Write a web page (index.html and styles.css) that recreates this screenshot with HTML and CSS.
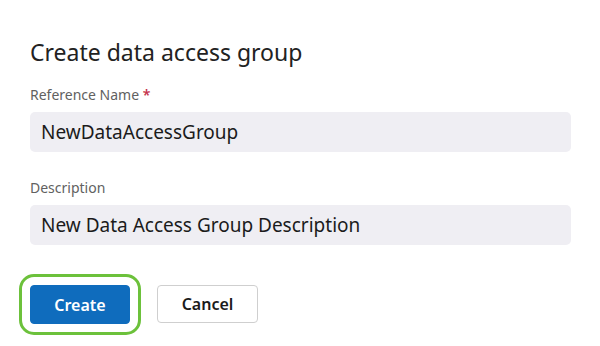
FILE: index.html
```html
<!DOCTYPE html>
<html lang="en">
<head>
<meta charset="utf-8">
<title>Create data access group</title>
<link rel="stylesheet" href="styles.css">
</head>
<body>
<div class="dag-panel">
  <h1 class="dag-title">Create data access group</h1>
  <div class="dag-field">
    <label class="dag-label">Reference Name <span class="dag-req">*</span></label>
    <div class="dag-input">NewDataAccessGroup</div>
  </div>
  <div class="dag-field">
    <label class="dag-label">Description</label>
    <div class="dag-input">New Data Access Group Description</div>
  </div>
  <div class="dag-btns">
    <button class="dag-btn dag-btn-primary">Create</button>
    <button class="dag-btn">Cancel</button>
  </div>
</div>
</body>
</html>
```
FILE: styles.css
```css
*{margin:0;padding:0;box-sizing:border-box;}
body{background:#fff;font-family:"Noto Sans","Open Sans",sans-serif;color:#1b1b1b;}
.dag-panel{width:600px;height:346px;padding:36px 29px 0 30px;display:flex;flex-direction:column;}
.dag-title{font-size:23px;font-weight:400;line-height:32px;color:#222;}
.dag-field{display:flex;flex-direction:column;margin-top:17px;}
.dag-field + .dag-field{margin-top:26px;}
.dag-label{font-size:14px;line-height:20px;color:#616161;}
.dag-req{color:#c4314b;font-weight:600;}
.dag-input{margin-top:7px;height:40px;background:#efeef3;border-radius:5px;padding:0 11px;font-size:19px;line-height:40px;color:#1b1b1b;}
.dag-btns{display:flex;gap:27px;margin-top:40px;}
.dag-btn{width:101px;height:38px;border:1px solid #cfcfcf;border-radius:4px;background:#fff;font-family:inherit;font-size:16px;font-weight:600;color:#1b1b1b;}
.dag-btn-primary{width:100px;height:39px;background:#0f6cbd;border-color:#0f6cbd;color:#fff;outline:3px solid #6cc13b;outline-offset:8px;border-radius:4px;}
```
